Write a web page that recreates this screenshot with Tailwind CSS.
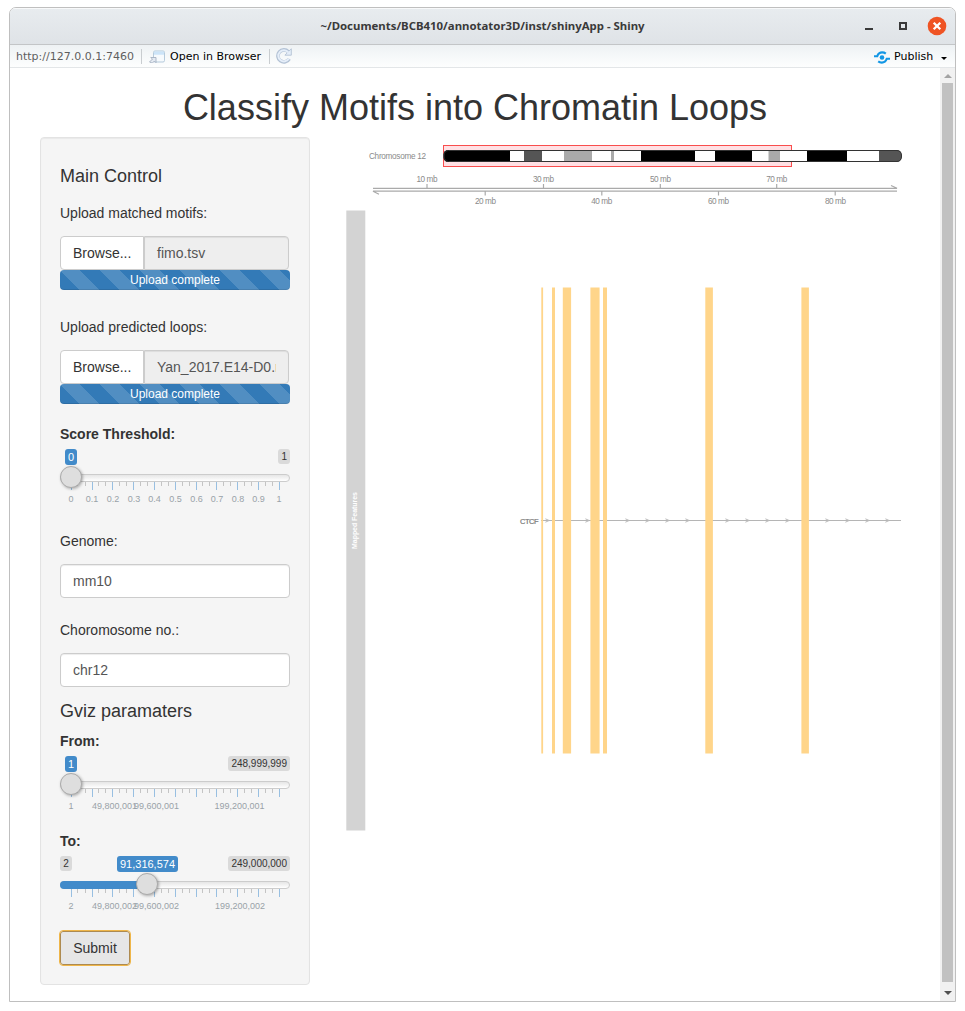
<!DOCTYPE html>
<html lang="en">
<head>
<meta charset="utf-8">
<title>annotator3D - Shiny</title>
<script src="https://cdn.jsdelivr.net/npm/@tailwindcss/browser@4"></script>
</head>
<body class="bg-white w-[965px] h-[1011px] overflow-hidden pt-[7px] pl-[9px] font-['Liberation_Sans',sans-serif] text-[14px] leading-5 text-[#333]">
<svg width="0" height="0" class="absolute">
  <defs>
    <g id="ticks" fill="none" shape-rendering="crispEdges">
      <path stroke="#c4c4c4" d="M17.5 0v4M25.5 0v4M38.5 0v4M45.5 0v4M59.5 0v4M66.5 0v4M80.5 0v4M87.5 0v4M101.5 0v4M108.5 0v4M122.5 0v4M129.5 0v4M142.5 0v4M149.5 0v4M163.5 0v4M170.5 0v4M184.5 0v4M191.5 0v4M205.5 0v4M212.5 0v4"/>
      <path stroke="#98bfe1" d="M11.5 0v8M32.5 0v8M52.5 0v8M73.5 0v8M94.5 0v8M115.5 0v8M136.5 0v8M156.5 0v8M177.5 0v8M198.5 0v8M219.5 0v8"/>
    </g>
    <path id="chev" d="M-1.600 -1.7L2.2 0L-1.600 1.7" fill="none" stroke="#bbb" stroke-width="1"/>
  </defs>
</svg>
<div class="w-[947px] h-[995px] border border-[#bfbfbf] rounded-t-[7px] flex flex-col overflow-hidden">
  <header class="h-[37px] shrink-0 bg-linear-to-b from-[#e8ecef] to-[#dfe3e7] border-b border-[#c3c5c7] shadow-[inset_0_1px_0_#f8f9fa] flex items-center relative">
    <h1 class="w-full text-center pr-0 font-['Noto_Sans',sans-serif] font-bold text-[11.4px] text-[#3a3a3a]">~/Documents/BCB410/annotator3D/inst/shinyApp - Shiny</h1>
    <svg class="absolute right-[8px] top-[6px]" width="85" height="24" viewBox="862 14 85 24">
      <rect x="865" y="28" width="8" height="2" fill="#3a3a3a"/>
      <rect x="900" y="23" width="6" height="6" fill="none" stroke="#3a3a3a" stroke-width="2"/>
      <circle cx="937" cy="26" r="9.3" fill="#ef5424"/>
      <path d="M933.7 22.7l6.6 6.6M940.3 22.7l-6.6 6.6" stroke="#fff" stroke-width="2.3"/>
    </svg>
  </header>
  <nav class="h-[23px] shrink-0 bg-linear-to-b from-[#eef2f4] to-[#fdfefe] border-b border-[#e3e6e8] flex items-center font-['DejaVu_Sans',sans-serif] text-[11px] text-black pl-[6px] pr-[8px]">
    <span class="text-[#5f5f5f] w-[118px] shrink-0 pt-[2px]">http://127.0.0.1:7460</span>
    <i class="w-px h-[15px] ml-[7px] bg-[#c9cdd0]"></i>
    <svg class="ml-[7px]" width="17" height="14" viewBox="149 49.500 17 14">
      <rect x="153.5" y="51.5" width="11" height="11" rx="1.5" fill="#f6fafd" stroke="#b5cadb"/>
      <path d="M154 52h10v3.2h-10z" fill="#cce4f8"/>
      <path d="M149.5 62.5l3-3-1.8-1.5h5.3v5.2l-1.6-1.7-2 2.1z" fill="#e4eaf2" stroke="#a5b1c2" stroke-width=".9"/>
    </svg>
    <span class="ml-[4px] w-[92px] shrink-0 pt-[2px]">Open in Browser</span>
    <i class="w-px h-[15px] ml-[7px] bg-[#c9cdd0]"></i>
    <svg class="ml-[6px]" width="16" height="16" viewBox="0 0 16 16">
      <path d="M13.2 10.8A6 6 0 1 1 12.3 3.8" fill="none" stroke="#b3c2d5" stroke-width="3.6"/>
      <path d="M15.3 .8v6.4H8.9z" fill="#e5eef9" stroke="#b3c2d5" stroke-width=".9"/>
      <path d="M12.8 10.5A5.6 5.6 0 1 1 12.3 4.3" fill="none" stroke="#e5eef9" stroke-width="2"/>
    </svg>
    <svg class="ml-auto mt-[2px]" width="16" height="13" viewBox="0 0 16 13">
      <circle cx="8" cy="6.5" r="2.3" fill="#1397e5"/>
      <path d="M0 5.3h3.2C4 3 5.8 1.4 8.2 1.4c1.500 0 2.600.400 3.600 1.200M16 7.700h-3.200c-.8 2.300-2.600 3.900-5 3.900-1.500 0-2.600-.4-3.600-1.200" fill="none" stroke="#1397e5" stroke-width="2.1"/>
    </svg>
    <span class="ml-[4px] w-[40px] shrink-0 pt-[2px]">Publish</span>
    <i class="ml-[7px] mt-[4px] border-x-[3px] border-x-transparent border-t-[3px] border-t-black"></i>
  </nav>
  <div class="flex-1 flex min-h-0">
    <main class="w-[930px] pl-[30px] pt-[20px]">
      <h2 class="text-center pr-[30px] text-[36px] leading-[40px]">Classify Motifs into Chromatin Loops</h2>
      <div class="flex mt-[9px]">
        <section class="w-[270px] h-[848px] shrink-0 bg-[#f5f5f5] border border-[#e3e3e3] rounded-[4px] px-[19px] pt-[28px] shadow-[inset_0_1px_1px_rgba(0,0,0,.05)]">
          <h4 class="text-[18px]">Main Control</h4>
          <p class="mt-[17px]">Upload matched motifs:</p>
          <div class="mt-[13px] flex h-[34px] w-[229px]">
            <span class="w-[84px] shrink-0 bg-white border border-[#ccc] rounded-l-[4px] pl-3 leading-[32px]">Browse...</span>
            <span class="flex-1 min-w-0 bg-[#eee] border border-[#ccc] rounded-r-[4px] px-3 leading-[32px] text-[#555] shadow-[inset_0_1px_1px_rgba(0,0,0,.075)]">fimo.tsv</span>
          </div>
          <div class="h-5 rounded-[4px] text-center text-[12px] text-white bg-[#337ab7] bg-[linear-gradient(45deg,rgba(255,255,255,.15)_25%,transparent_25%,transparent_50%,rgba(255,255,255,.15)_50%,rgba(255,255,255,.15)_75%,transparent_75%,transparent)] bg-[length:40px_40px] shadow-[inset_0_-1px_0_rgba(0,0,0,.1)]">Upload complete</div>
          <p class="mt-[27px]">Upload predicted loops:</p>
          <div class="mt-[13px] flex h-[34px] w-[229px]">
            <span class="w-[84px] shrink-0 bg-white border border-[#ccc] rounded-l-[4px] pl-3 leading-[32px]">Browse...</span>
            <span class="flex-1 min-w-0 bg-[#eee] border border-[#ccc] rounded-r-[4px] px-3 leading-[32px] text-[#555] shadow-[inset_0_1px_1px_rgba(0,0,0,.075)]"><span class="block overflow-hidden whitespace-nowrap">Yan_2017.E14-D0.mm10</span></span>
          </div>
          <div class="h-5 rounded-[4px] text-center text-[12px] text-white bg-[#337ab7] bg-[linear-gradient(45deg,rgba(255,255,255,.15)_25%,transparent_25%,transparent_50%,rgba(255,255,255,.15)_50%,rgba(255,255,255,.15)_75%,transparent_75%,transparent)] bg-[length:40px_40px] shadow-[inset_0_-1px_0_rgba(0,0,0,.1)]">Upload complete</div>

          <p class="mt-5 font-bold">Score Threshold:</p>
          <div class="relative h-[60px] pt-[5px]">
            <div class="flex justify-between items-start text-[10px] h-[25px]">
              <span class="ml-[5px] w-3 h-4 rounded-[3px] bg-[#428bca] text-white text-center text-[11px] leading-[16px]">0</span>
              <span class="h-[15px] rounded-[3px] bg-[#dadada] px-[3px] leading-[15px]">1</span>
            </div>
            <div class="h-2 rounded-[8px] border border-[#ccc] bg-linear-to-b from-[#e6e6e6] to-white"></div>
            <svg class="block overflow-visible" width="230" height="22" font-size="9" fill="#99a2a8" text-anchor="middle"><use href="#ticks"/><text x="11" y="20">0</text><text x="32" y="20">0.1</text><text x="53" y="20">0.2</text><text x="74" y="20">0.3</text><text x="94.500" y="20">0.4</text><text x="115.500" y="20">0.5</text><text x="136.500" y="20">0.6</text><text x="157" y="20">0.7</text><text x="178" y="20">0.8</text><text x="198.500" y="20">0.9</text><text x="219" y="20">1</text></svg>
            <i class="absolute left-0 top-[22px] size-[22px] rounded-full bg-[#dedede] border border-[#ababab] shadow-[1px_1px_3px_rgba(0,0,0,.3)]"></i>
          </div>

          <p class="mt-[27px]">Genome:</p>
          <div class="mt-[13px] h-[34px] bg-white border border-[#ccc] rounded-[4px] px-3 leading-[32px] text-[#555] shadow-[inset_0_1px_1px_rgba(0,0,0,.075)]">mm10</div>
          <p class="mt-[22px]">Choromosome no.:</p>
          <div class="mt-[13px] h-[34px] bg-white border border-[#ccc] rounded-[4px] px-3 leading-[32px] text-[#555] shadow-[inset_0_1px_1px_rgba(0,0,0,.075)]">chr12</div>
          <h4 class="mt-[14px] text-[18px]">Gviz paramaters</h4>

          <p class="mt-[10px] font-bold">From:</p>
          <div class="relative h-[60px] pt-[5px]">
            <div class="flex justify-between items-start text-[10px] h-[25px]">
              <span class="ml-[5px] w-3 h-4 rounded-[3px] bg-[#428bca] text-white text-center text-[11px] leading-[16px]">1</span>
              <span class="h-[15px] rounded-[3px] bg-[#dadada] px-[3px] leading-[15px]">248,999,999</span>
            </div>
            <div class="h-2 rounded-[8px] border border-[#ccc] bg-linear-to-b from-[#e6e6e6] to-white"></div>
            <svg class="block overflow-visible" width="230" height="22" font-size="9" fill="#99a2a8" text-anchor="middle"><use href="#ticks"/><text x="11" y="20">1</text><text x="54.500" y="20">49,800,001</text><text x="96.500" y="20">99,600,001</text><text x="179.500" y="20">199,200,001</text></svg>
            <i class="absolute left-0 top-[22px] size-[22px] rounded-full bg-[#dedede] border border-[#ababab] shadow-[1px_1px_3px_rgba(0,0,0,.3)]"></i>
          </div>

          <p class="mt-5 font-bold">To:</p>
          <div class="relative h-[60px] pt-[5px]">
            <div class="flex items-start text-[10px] h-[25px]">
              <span class="h-[15px] w-3 text-center rounded-[3px] bg-[#dadada] leading-[15px]">2</span>
              <span class="ml-[45px] w-[61px] h-4 rounded-[3px] bg-[#428bca] text-white text-center text-[11px] leading-[16px]">91,316,574</span>
              <span class="ml-auto h-[15px] rounded-[3px] bg-[#dadada] px-[3px] leading-[15px]">249,000,000</span>
            </div>
            <div class="h-2 rounded-[8px] border border-[#ccc] bg-linear-to-b from-[#e6e6e6] to-white"><div class="-m-px h-2 w-[88px] rounded-l-[4px] bg-[#428bca]"></div></div>
            <svg class="block overflow-visible" width="230" height="22" font-size="9" fill="#99a2a8" text-anchor="middle"><use href="#ticks"/><text x="11" y="20">2</text><text x="54.500" y="20">49,800,002</text><text x="96.500" y="20">99,600,002</text><text x="180" y="20">199,200,002</text></svg>
            <i class="absolute left-[76px] top-[22px] size-[22px] rounded-full bg-[#dedede] border border-[#ababab] shadow-[1px_1px_3px_rgba(0,0,0,.3)]"></i>
          </div>

          <button class="mt-5 block w-[70px] h-[34px] bg-[#e6e6e6] border border-[#ad8a50] rounded-[3px] outline-[1.500px] outline-[#efb649] text-center">Submit</button>
        </section>

        <svg width="600" height="720" viewBox="310 137 600 720" font-size="8.2" fill="#8a8a8a">
          <rect x="443.500" y="145.500" width="348" height="21" fill="#ffe0e4" stroke="#f94d4d"/>
          <clipPath id="chr"><rect x="443.500" y="150" width="458" height="12" rx="4.500"/></clipPath>
          <g clip-path="url(#chr)">
            <rect x="443" y="150" width="459" height="12" fill="#fff"/>
            <path fill="#000" d="M443 150h67v12h-67zM641 150h54v12h-54zM715 150h37v12h-37zM807 150h40v12h-40z"/>
            <path fill="#555" d="M524 150h18v12h-18zM879 150h23v12h-23z"/>
            <path fill="#aaa" d="M564 150h28v12h-28zM611 150h3v12h-3zM768.500 150h11.500v12h-11.500z"/>
          </g>
          <rect x="444" y="150.500" width="457.500" height="11" rx="4.500" fill="none" stroke="#333"/>
          <text x="369" y="159" textLength="57">Chromosome 12</text>
          <g text-anchor="middle">
            <text x="427" y="182" textLength="21">10 mb</text><text x="543.500" y="182" textLength="21">30 mb</text><text x="660.500" y="182" textLength="21">50 mb</text><text x="776.700" y="182" textLength="21">70 mb</text>
            <text x="485.500" y="204" textLength="21">20 mb</text><text x="601.700" y="204" textLength="21">40 mb</text><text x="718.500" y="204" textLength="21">60 mb</text><text x="835.500" y="204" textLength="21">80 mb</text>
          </g>
          <path fill="none" stroke="#aaa" stroke-width="1.200" d="M373 188.300H897L891 185.500M897 191.200H373L379 194.200M427 184v4M543.500 184v4M660.300 184v4M776.700 184v4M485.200 191v4.500M601.800 191v4.500M718.500 191v4.500M835.200 191v4.500"/>
          <rect x="346.300" y="210.500" width="19" height="620" fill="#d3d3d3"/>
          <text transform="translate(356.500 520.500) rotate(-90)" text-anchor="middle" font-size="7" font-weight="bold" fill="#fff" textLength="57">Mapped Features</text>
          <path d="M541 520.500H901" stroke="#b5b5b5"/>
          <use href="#chev" x="547" y="520.500"/><use href="#chev" x="587" y="520.500"/><use href="#chev" x="627" y="520.500"/><use href="#chev" x="647" y="520.500"/><use href="#chev" x="667" y="520.500"/><use href="#chev" x="687" y="520.500"/><use href="#chev" x="727" y="520.500"/><use href="#chev" x="747" y="520.500"/><use href="#chev" x="767" y="520.500"/><use href="#chev" x="787" y="520.500"/><use href="#chev" x="827" y="520.500"/><use href="#chev" x="847" y="520.500"/><use href="#chev" x="867" y="520.500"/><use href="#chev" x="887" y="520.500"/>
          <path fill="#ffd58a" d="M541.300 287.500h1.800v466h-1.800zM552 287.500h3v466h-3zM562.800 287.500h8.300v466h-8.300zM590.400 287.500h9.200v466h-9.200zM603 287.500h4v466h-4zM705.300 287.500h7.600v466h-7.600zM801.400 287.500h7.500v466h-7.500z"/>
          <text x="520" y="523.700" textLength="18.500" font-size="7.500" fill="#777" stroke="#777" stroke-width=".2">CTCF</text>
        </svg>
      </div>
    </main>
    <aside class="w-[15px] bg-[#f1f1f1] flex flex-col items-center">
      <i class="mt-[6px] border-x-4 border-x-transparent border-b-4 border-b-[#a3a3a3]"></i>
      <div class="mt-[5px] w-[11px] h-[899px] bg-[#c1c1c1]"></div>
      <i class="mt-[9px] border-x-4 border-x-transparent border-t-4 border-t-[#505050]"></i>
    </aside>
  </div>
</div>
</body>
</html>
